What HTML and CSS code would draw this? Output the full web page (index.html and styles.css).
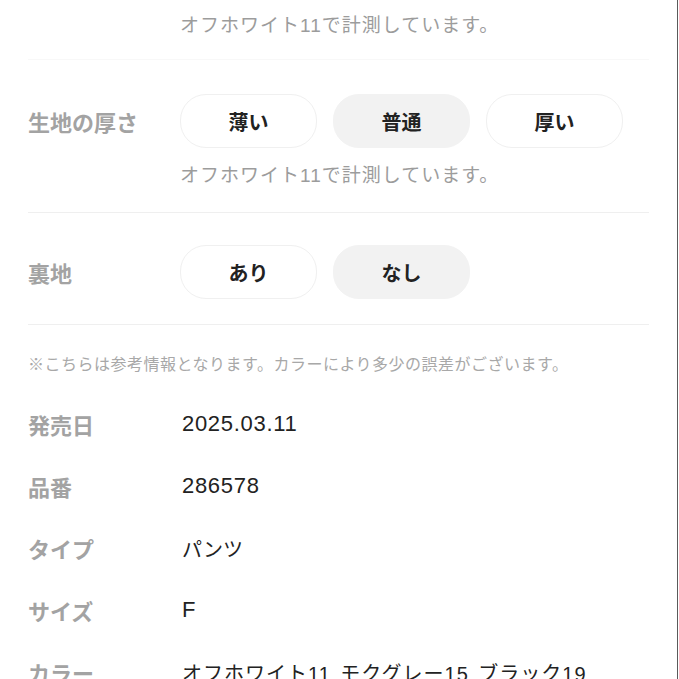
FILE: index.html
```html
<!DOCTYPE html>
<html>
  <head>
    <meta charset="utf-8" />
    <meta name="viewport" content="width=device-width, initial-scale=1" />
    <title>商品詳細</title>
    <link rel="stylesheet" href="styles.css">
  </head>
  <body>
    <div class="page">
      <p class="note note-top">オフホワイト11で計測しています。</p>
      <div class="divider faint"></div>

      <div class="section section-thick">
        <div class="option-row">
          <div class="label">生地の厚さ</div>
          <div class="choices">
            <div class="choice">薄い</div>
            <div class="choice selected">普通</div>
            <div class="choice">厚い</div>
          </div>
        </div>
        <p class="note note-under">オフホワイト11で計測しています。</p>
      </div>
      <div class="divider"></div>

      <div class="section section-lining">
        <div class="option-row">
          <div class="label">裏地</div>
          <div class="choices">
            <div class="choice">あり</div>
            <div class="choice selected">なし</div>
          </div>
        </div>
      </div>
      <div class="divider"></div>

      <p class="disclaimer">※こちらは参考情報となります。カラーにより多少の誤差がございます。</p>

      <div class="specs">
        <div class="spec-row">
          <div class="label">発売日</div>
          <div class="value num">2025.03.11</div>
        </div>
        <div class="spec-row">
          <div class="label">品番</div>
          <div class="value num">286578</div>
        </div>
        <div class="spec-row">
          <div class="label">タイプ</div>
          <div class="value">パンツ</div>
        </div>
        <div class="spec-row">
          <div class="label">サイズ</div>
          <div class="value num">F</div>
        </div>
        <div class="spec-row">
          <div class="label">カラー</div>
          <div class="value colors">オフホワイト11 モクグレー15 ブラック19</div>
        </div>
      </div>
    </div>
  </body>
</html>
```

FILE: styles.css
```css
body {
  margin: 0;
  background-color: white;
  font-family: "Liberation Sans", "Noto Sans CJK JP", sans-serif;
  color: #222;
}
p {
  margin: 0;
}
.page {
  width: 678px;
  height: 679px;
  border-right: 1px solid #5a5a5a;
  overflow: hidden;
  padding-left: 28px;
  box-sizing: border-box;
}
.note {
  color: #9c9c9c;
  font-size: 19px;
  line-height: 24px;
  margin-left: 152px;
  letter-spacing: 1px;
}
.note-top {
  padding-top: 14px;
  height: 34px;
}
.note-under {
  margin-top: 16px;
}
.divider {
  height: 1px;
  background-color: #efefef;
  margin-right: 28px;
}
.divider.faint {
  margin-top: 11px;
  background-color: #f8f8f8;
}
.section-thick {
  padding-top: 34px;
  padding-bottom: 24px;
}
.section-lining {
  padding-top: 32px;
  padding-bottom: 25px;
}
.option-row {
  display: flex;
  align-items: center;
}
.label {
  width: 152px;
  flex-shrink: 0;
  color: #a3a3a3;
  font-size: 22px;
  font-weight: 700;
}
.choices {
  display: flex;
  gap: 16px;
}
.choice {
  width: 137px;
  height: 54px;
  box-sizing: border-box;
  border: 1px solid #f0f0f0;
  border-radius: 26px;
  display: flex;
  align-items: center;
  justify-content: center;
  font-size: 20px;
  font-weight: 700;
  color: #222;
}
.choice.selected {
  background-color: #f2f2f2;
  border-color: #f2f2f2;
}
.disclaimer {
  margin-top: 28px;
  color: #a8a8a8;
  font-size: 16px;
  line-height: 24px;
  letter-spacing: 0.5px;
}
.specs {
  margin-top: 16px;
}
.spec-row {
  display: flex;
  align-items: center;
  height: 62px;
}
.value {
  font-size: 20px;
  color: #222;
  padding-left: 2px;
  white-space: nowrap;
}
.value.num {
  font-size: 22px;
  letter-spacing: 0.7px;
}
.value.colors {
  letter-spacing: 1px;
  word-spacing: 3px;
}
```
